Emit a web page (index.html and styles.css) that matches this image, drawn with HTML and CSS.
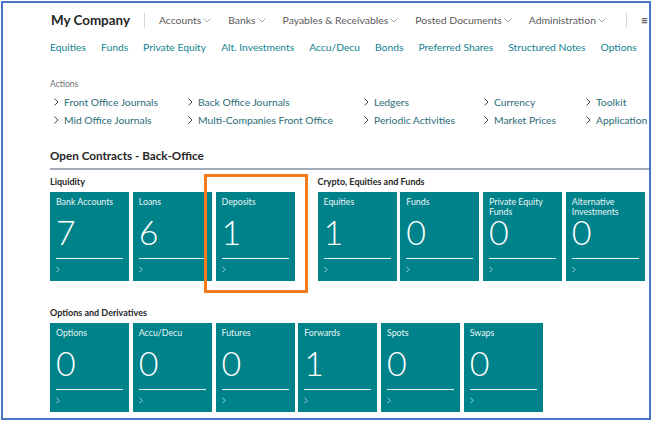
FILE: index.html
```html
<!DOCTYPE html>
<html lang="en">
<head>
<meta charset="utf-8">
<title>My Company</title>
<link rel="stylesheet" href="styles.css">
</head>
<body>
<div class="frame">
  <header class="topnav">
    <span class="brand">My Company</span>
    <span class="sep"></span>
    <span class="menu">Accounts<svg class="dd" viewBox="0 0 8 5"><polyline points="0.5,0.5 4,4 7.5,0.5"/></svg></span>
    <span class="menu">Banks<svg class="dd" viewBox="0 0 8 5"><polyline points="0.5,0.5 4,4 7.5,0.5"/></svg></span>
    <span class="menu">Payables &amp; Receivables<svg class="dd" viewBox="0 0 8 5"><polyline points="0.5,0.5 4,4 7.5,0.5"/></svg></span>
    <span class="menu">Posted Documents<svg class="dd" viewBox="0 0 8 5"><polyline points="0.5,0.5 4,4 7.5,0.5"/></svg></span>
    <span class="menu">Administration<svg class="dd" viewBox="0 0 8 5"><polyline points="0.5,0.5 4,4 7.5,0.5"/></svg></span>
    <span class="sep sep-right"></span>
    <span class="more">&#8801;</span>
  </header>

  <nav class="subnav">
    <a>Equities</a><a>Funds</a><a>Private Equity</a><a>Alt. Investments</a><a>Accu/Decu</a><a>Bonds</a><a>Preferred Shares</a><a>Structured Notes</a><a>Options</a>
  </nav>

  <section class="actions">
    <div class="actions-label">Actions</div>
    <div class="actions-grid">
      <a class="act"><svg viewBox="0 0 5 8"><polyline points="0.5,0.5 4,4 0.5,7.5"/></svg>Front Office Journals</a>
      <a class="act"><svg viewBox="0 0 5 8"><polyline points="0.5,0.5 4,4 0.5,7.5"/></svg>Back Office Journals</a>
      <a class="act"><svg viewBox="0 0 5 8"><polyline points="0.5,0.5 4,4 0.5,7.5"/></svg>Ledgers</a>
      <a class="act"><svg viewBox="0 0 5 8"><polyline points="0.5,0.5 4,4 0.5,7.5"/></svg>Currency</a>
      <a class="act"><svg viewBox="0 0 5 8"><polyline points="0.5,0.5 4,4 0.5,7.5"/></svg>Toolkit</a>
      <a class="act"><svg viewBox="0 0 5 8"><polyline points="0.5,0.5 4,4 0.5,7.5"/></svg>Mid Office Journals</a>
      <a class="act"><svg viewBox="0 0 5 8"><polyline points="0.5,0.5 4,4 0.5,7.5"/></svg>Multi-Companies Front Office</a>
      <a class="act"><svg viewBox="0 0 5 8"><polyline points="0.5,0.5 4,4 0.5,7.5"/></svg>Periodic Activities</a>
      <a class="act"><svg viewBox="0 0 5 8"><polyline points="0.5,0.5 4,4 0.5,7.5"/></svg>Market Prices</a>
      <a class="act"><svg viewBox="0 0 5 8"><polyline points="0.5,0.5 4,4 0.5,7.5"/></svg>Application</a>
    </div>
  </section>

  <section class="contracts">
    <h2 class="contracts-title">Open Contracts - Back-Office</h2>
    <div class="groups">
      <div class="group">
        <div class="group-label">Liquidity</div>
        <div class="tiles">
          <div class="tile"><div class="tile-title">Bank Accounts</div><div class="tile-num">7</div><div class="tile-foot"><svg viewBox="0 0 5 8"><polyline points="0.5,0.5 4,4 0.5,7.5"/></svg></div></div>
          <div class="tile"><div class="tile-title">Loans</div><div class="tile-num">6</div><div class="tile-foot"><svg viewBox="0 0 5 8"><polyline points="0.5,0.5 4,4 0.5,7.5"/></svg></div></div>
          <div class="tile highlighted"><div class="tile-title">Deposits</div><div class="tile-num">1</div><div class="tile-foot"><svg viewBox="0 0 5 8"><polyline points="0.5,0.5 4,4 0.5,7.5"/></svg></div><span class="callout"></span></div>
        </div>
      </div>
      <div class="group">
        <div class="group-label">Crypto, Equities and Funds</div>
        <div class="tiles">
          <div class="tile"><div class="tile-title">Equities</div><div class="tile-num">1</div><div class="tile-foot"><svg viewBox="0 0 5 8"><polyline points="0.5,0.5 4,4 0.5,7.5"/></svg></div></div>
          <div class="tile"><div class="tile-title">Funds</div><div class="tile-num">0</div><div class="tile-foot"><svg viewBox="0 0 5 8"><polyline points="0.5,0.5 4,4 0.5,7.5"/></svg></div></div>
          <div class="tile"><div class="tile-title">Private Equity Funds</div><div class="tile-num">0</div><div class="tile-foot"><svg viewBox="0 0 5 8"><polyline points="0.5,0.5 4,4 0.5,7.5"/></svg></div></div>
          <div class="tile"><div class="tile-title">Alternative Investments</div><div class="tile-num">0</div><div class="tile-foot"><svg viewBox="0 0 5 8"><polyline points="0.5,0.5 4,4 0.5,7.5"/></svg></div></div>
          <div class="tile tile-clipped" aria-hidden="true"></div>
        </div>
      </div>
    </div>
    <div class="group group-second">
      <div class="group-label">Options and Derivatives</div>
      <div class="tiles">
        <div class="tile"><div class="tile-title">Options</div><div class="tile-num">0</div><div class="tile-foot"><svg viewBox="0 0 5 8"><polyline points="0.5,0.5 4,4 0.5,7.5"/></svg></div></div>
        <div class="tile"><div class="tile-title">Accu/Decu</div><div class="tile-num">0</div><div class="tile-foot"><svg viewBox="0 0 5 8"><polyline points="0.5,0.5 4,4 0.5,7.5"/></svg></div></div>
        <div class="tile"><div class="tile-title">Futures</div><div class="tile-num">0</div><div class="tile-foot"><svg viewBox="0 0 5 8"><polyline points="0.5,0.5 4,4 0.5,7.5"/></svg></div></div>
        <div class="tile"><div class="tile-title">Forwards</div><div class="tile-num">1</div><div class="tile-foot"><svg viewBox="0 0 5 8"><polyline points="0.5,0.5 4,4 0.5,7.5"/></svg></div></div>
        <div class="tile"><div class="tile-title">Spots</div><div class="tile-num">0</div><div class="tile-foot"><svg viewBox="0 0 5 8"><polyline points="0.5,0.5 4,4 0.5,7.5"/></svg></div></div>
        <div class="tile"><div class="tile-title">Swaps</div><div class="tile-num">0</div><div class="tile-foot"><svg viewBox="0 0 5 8"><polyline points="0.5,0.5 4,4 0.5,7.5"/></svg></div></div>
      </div>
    </div>
  </section>
</div>
</body>
</html>
```

FILE: styles.css
```css
* { box-sizing: border-box; }

html, body {
  margin: 0;
  padding: 0;
  background: #ffffff;
}

body {
  font-family: Lato, "Liberation Sans", sans-serif;
  color: #262626;
}

.frame {
  margin: 1px 0 0 1px;
  width: 650px;
  height: 419px;
  border: 2px solid #4a74c8;
  background: #ffffff;
  overflow: hidden;
  padding-left: 47px;
}

/* ---------- top navigation ---------- */
.topnav {
  height: 34px;
  display: flex;
  align-items: center;
  white-space: nowrap;
}

.brand {
  font-size: 13.4px;
  font-weight: 700;
  color: #262626;
  margin-left: 1px;
}

.sep {
  width: 1px;
  height: 15px;
  background: #d6d6d6;
  margin: 0 14px 0 14px;
  flex-shrink: 0;
}

.sep-right {
  margin: 0 14px 0 3px;
}

.menu {
  display: flex;
  align-items: center;
  font-size: 10.4px;
  color: #5a5a5a;
  margin-right: 17px;
}

.dd {
  width: 8px;
  height: 5px;
  margin-left: 2px;
  margin-top: 1px;
  fill: none;
  stroke: #a6a6a6;
  stroke-width: 1;
}

.more {
  font-size: 12px;
  color: #444;
}

/* ---------- sub navigation ---------- */
.subnav {
  height: 20px;
  display: flex;
  align-items: center;
  gap: 15px;
  white-space: nowrap;
}

.subnav a {
  font-size: 10.3px;
  color: #0f8290;
}

/* ---------- actions ---------- */
.actions {
  margin-top: 21px;
}

.actions-label {
  font-size: 8.5px;
  line-height: 12px;
  color: #707070;
}

.actions-grid {
  margin-top: 3px;
  display: grid;
  grid-template-columns: 134px 176px 120px 102px 120px;
  grid-auto-rows: 18px;
  white-space: nowrap;
}

.act {
  display: flex;
  align-items: center;
  font-size: 10.3px;
  color: #2a6c77;
  padding-left: 4px;
}

.act svg {
  width: 5px;
  height: 8px;
  margin-right: 5px;
  fill: none;
  stroke: #3d4a52;
  stroke-width: 1;
}

/* ---------- contracts ---------- */
.contracts {
  margin-top: 18px;
}

.contracts-title {
  margin: 0;
  font-size: 11.7px;
  line-height: 16px;
  font-weight: 700;
  color: #262626;
  padding-bottom: 5px;
  border-bottom: 2px solid #a3abb6;
  white-space: nowrap;
}

.groups {
  display: flex;
  gap: 23px;
  margin-top: 6px;
}

.group {
  flex-shrink: 0;
}

.group-second {
  margin-top: 26px;
}

.group-label {
  font-size: 9px;
  line-height: 12px;
  font-weight: 700;
  color: #262626;
  white-space: nowrap;
}

.tiles {
  display: flex;
  gap: 3.75px;
  margin-top: 4px;
}

.tile {
  position: relative;
  flex: 0 0 79px;
  width: 79px;
  height: 89px;
  background: #00828a;
  padding: 5px 6px 0 6px;
  color: #ffffff;
}

.tile-title {
  height: 20px;
  font-size: 8.8px;
  line-height: 10px;
  color: #eaf6f6;
}

.tile-num {
  font-size: 34px;
  line-height: 30px;
  font-weight: 300;
  color: #ffffff;
  padding-bottom: 11px;
  border-bottom: 1px solid #e6f3f3;
  height: 42px;
}

.tile-foot {
  height: 21px;
  display: flex;
  align-items: center;
}

.tile-foot svg {
  width: 4px;
  height: 7px;
  fill: none;
  stroke: #c6e4e4;
  stroke-width: 1;
}

.callout {
  position: absolute;
  left: -12px;
  right: -13px;
  top: -18px;
  bottom: -12px;
  border: 3px solid #f47a20;
  pointer-events: none;
}
```
